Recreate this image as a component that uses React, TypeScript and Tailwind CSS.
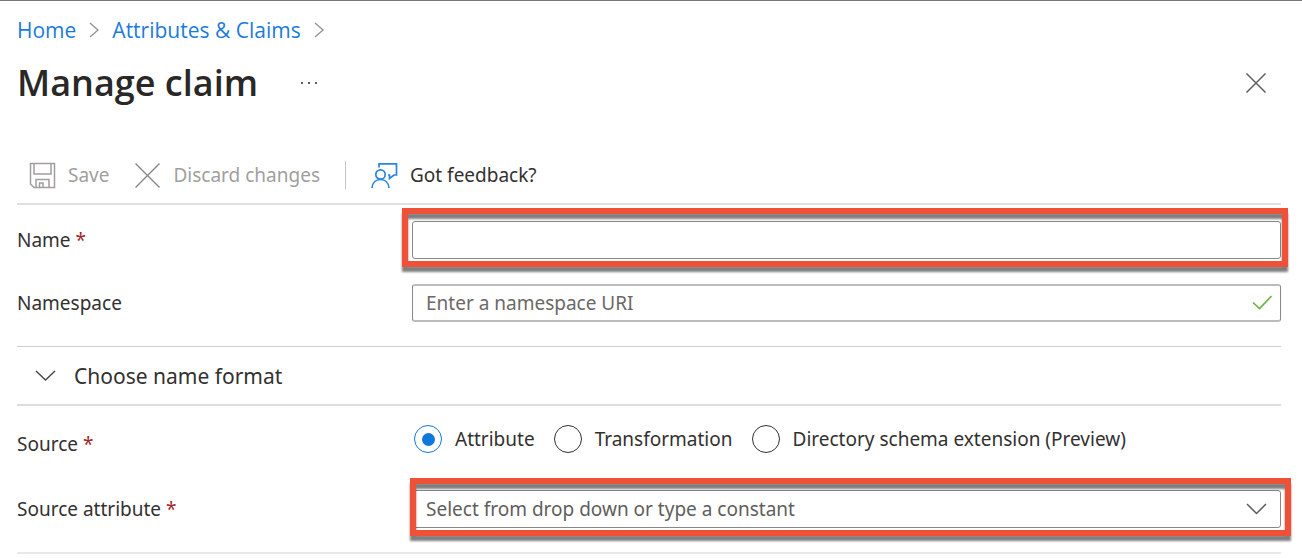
/**
 * Manage claim screen.
 */

import { useState } from 'react';
import type { ReactNode } from 'react';

interface FieldRowProps {
  label: string;
  htmlFor?: string;
  id?: string;
  required?: boolean;
  children: ReactNode;
}

const SOURCES = ['Attribute', 'Transformation', 'Directory schema extension (Preview)'];

function FieldRow({ label, htmlFor, id, required, children }: FieldRowProps) {
  const text = (
    <>
      {label}
      {required && <span className="text-[#a4262c]"> *</span>}
    </>
  );

  return (
    <div className="flex items-center h-[38px]">
      {htmlFor ? (
        <label htmlFor={htmlFor} className="w-[395px] shrink-0">{text}</label>
      ) : (
        <span id={id} className="w-[395px] shrink-0">{text}</span>
      )}
      {children}
    </div>
  );
}

function BreadcrumbArrow() {
  return (
    <svg className="w-3 h-5" viewBox="0 0 12 20" fill="none" stroke="#979593" strokeWidth={1.4} aria-hidden="true">
      <path d="M2 3 10 10 2 17" />
    </svg>
  );
}

export default function App() {
  const [name, setName] = useState('');
  const [namespace, setNamespace] = useState('');
  const [source, setSource] = useState(SOURCES[0]);

  return (
    <div className="bg-white border-t border-[#777777] pl-[17px] pr-[21px] pt-[14px] font-['Noto_Sans','Open_Sans',sans-serif] text-[19px] leading-7 text-[#323130]">
      <nav aria-label="Breadcrumb" className="flex items-center gap-3 h-[30px] font-['Open_Sans','Noto_Sans',sans-serif] text-[21px] text-[#1b7bdb]">
        <a href="#home">Home</a>
        <BreadcrumbArrow />
        <a href="#claims">Attributes &amp; Claims</a>
        <BreadcrumbArrow />
      </nav>

      <header className="flex items-center h-12 mt-[14px]">
        <h1 className="font-['Open_Sans','Noto_Sans',sans-serif] text-[36px] leading-[48px] font-semibold text-[#292827]">Manage claim</h1>
        <button aria-label="More" className="ml-10 p-px">
          <svg className="w-5 h-5" viewBox="0 0 20 20" fill="#605e5c">
            <rect x="2" y="9" width="2" height="2" />
            <rect x="9" y="9" width="2" height="2" />
            <rect x="16" y="9" width="2" height="2" />
          </svg>
        </button>
        <button aria-label="Close" className="ml-auto mr-[14px]">
          <svg className="w-[22px] h-[22px]" viewBox="0 0 22 22" fill="none" stroke="#605e5c" strokeWidth={1.5}>
            <path d="M1.500 1.500 20.500 20.500 M20.500 1.500 1.500 20.500" />
          </svg>
        </button>
      </header>

      {/* Toolbar */}
      <div className="flex items-center h-[58px] mt-10 pl-3 border-b-2 border-[#e1dfdd]">
        <button disabled className="flex items-center gap-3 text-[#a19f9d]">
          <svg className="w-[27px] h-[27px]" viewBox="0 0 27 27" fill="none" stroke="currentColor" strokeWidth={1.5}>
            <path d="M1.500 1.500h24v24H5l-3.500-3.500z" />
            <path d="M5 1.500v10.500h17V1.500" />
            <path d="M7 25.500v-8h13v8 M10.500 25.500v-4.500h3.500v4.500" />
          </svg>
          Save
        </button>
        <button disabled className="flex items-center gap-3 ml-[25px] text-[#a19f9d]">
          <svg className="w-[27px] h-[27px]" viewBox="0 0 27 27" fill="none" stroke="#8a8886" strokeWidth={1.4}>
            <path d="M1.500 1.500 25.500 25.500 M25.500 1.500 1.500 25.500" />
          </svg>
          Discard changes
        </button>
        <div className="w-px h-7 mx-[25px] bg-[#c8c6c4]" />
        <button className="flex items-center gap-3">
          <svg className="w-[27px] h-[27px]" viewBox="0 0 27 27" fill="none" stroke="#2b84e0" strokeWidth={1.7}>
            <path d="M8 5.500V1.800h17.500v11.200h-2.500l-4.500 3.500v-3.500h-1.500" />
            <circle cx="9.500" cy="12.500" r="4.700" />
            <path d="M1 26c.4-5.300 3.800-8.500 8.500-8.500S17.600 20.700 18 26" />
          </svg>
          Got feedback?
        </button>
      </div>

      <form>
        <div className="pt-4 pb-6 space-y-[25px]">
          <FieldRow label="Name" htmlFor="claim-name" required>
            <div className="relative flex-1 h-full">
              <input
                id="claim-name"
                value={name}
                onChange={(e) => setName(e.target.value)}
                className="block w-full h-full px-[13px] border border-[#8a8886] rounded-[3px] focus:outline-none"
              />
              <div className="absolute -top-[13px] -bottom-2 -left-[10px] -right-[7px] border-[6px] border-[#ee5138] drop-shadow-[0_5px_1px_rgba(0,0,0,0.5)] pointer-events-none" />
            </div>
          </FieldRow>
          <FieldRow label="Namespace" htmlFor="claim-namespace">
            <div className="relative flex-1 h-full">
              <input
                id="claim-namespace"
                value={namespace}
                onChange={(e) => setNamespace(e.target.value)}
                placeholder="Enter a namespace URI"
                className="block w-full h-full pl-[13px] pr-11 border-y-2 border-x border-y-[#bebcba] border-x-[#8a8886] rounded-[3px] placeholder-[#6b6967] focus:outline-none"
              />
              <svg className="absolute right-2 top-2 w-[22px] h-[22px]" viewBox="0 0 22 22" fill="none" stroke="#6bb344" strokeWidth={1.7} aria-hidden="true">
                <path d="M2 10.500 8.500 16.500 20.500 4" />
              </svg>
            </div>
          </FieldRow>
        </div>

        <button
          type="button"
          className="flex items-center gap-[18px] w-full h-[60px] pl-[18px] border-t border-b-2 border-t-[#d0cecc] border-b-[#dfdddb] text-[21px]"
        >
          <svg className="w-[21px] h-[21px]" viewBox="0 0 21 21" fill="none" stroke="#484644" strokeWidth={1.4}>
            <path d="M1 6 10.500 15 20 6" />
          </svg>
          Choose name format
        </button>

        <div className="pt-[19px] pb-6 space-y-[27px] border-b-2 border-[#e9e8e7]">
          <FieldRow label="Source" id="source-label" required>
            <div role="radiogroup" aria-labelledby="source-label" className="flex self-start gap-[19px] pl-0.5">
              {SOURCES.map((item) => (
                <label key={item} className="flex items-center gap-[13px]">
                  <input
                    type="radio"
                    name="source"
                    checked={source === item}
                    onChange={() => setSource(item)}
                    className="appearance-none grid place-content-center w-7 h-7 shrink-0 rounded-full border border-[#323130] checked:border-[#0f78d8] checked:before:block checked:before:w-[13px] checked:before:h-[13px] checked:before:rounded-full checked:before:bg-[#0f78d8]"
                  />
                  {item}
                </label>
              ))}
            </div>
          </FieldRow>
          <FieldRow label="Source attribute" htmlFor="source-attribute" required>
            <div className="relative flex-1 h-full">
              <select
                id="source-attribute"
                className="block appearance-none w-full h-full pl-[13px] pr-11 border border-[#8a8886] rounded-[3px] bg-white text-[#605e5c] focus:outline-none"
              >
                <option>Select from drop down or type a constant</option>
              </select>
              <svg className="absolute right-[14px] top-2 w-[21px] h-[21px] pointer-events-none" viewBox="0 0 21 21" fill="none" stroke="#605e5c" strokeWidth={1.5} aria-hidden="true">
                <path d="M1 6 10.500 15.500 20 6" />
              </svg>
              <div className="absolute -top-3 -bottom-2 -left-0.5 -right-[10px] border-[6px] border-[#ee5138] drop-shadow-[0_5px_1px_rgba(0,0,0,0.5)] pointer-events-none" />
            </div>
          </FieldRow>
        </div>
      </form>
    </div>
  );
}
